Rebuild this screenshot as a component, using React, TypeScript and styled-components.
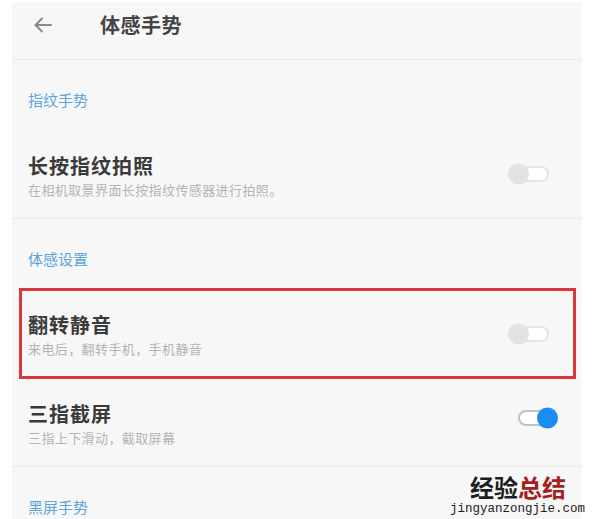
import React from 'react';
import styled, { createGlobalStyle } from 'styled-components';

type Item = {
  title: string;
  desc: string;
  on: boolean;
  marked?: boolean;
  divider?: boolean;
};

type Section = {
  label: string;
  items: Item[];
};

const sections: Section[] = [
  {
    label: '指纹手势',
    items: [
      { title: '长按指纹拍照', desc: '在相机取景界面长按指纹传感器进行拍照。', on: false, divider: true },
    ],
  },
  {
    label: '体感设置',
    items: [
      { title: '翻转静音', desc: '来电后，翻转手机，手机静音', on: false, marked: true },
      { title: '三指截屏', desc: '三指上下滑动，截取屏幕', on: true, divider: true },
    ],
  },
  { label: '黑屏手势', items: [] },
];

const App = () => {
  return (
    <>
      <GlobalStyle />
      <Page>
        <Screen>
          <Header>
            <BackButton>
              <svg width="20" height="20" viewBox="0 0 20 20" fill="none">
                <path d="M18 10H3M9 3.5L2.5 10L9 16.5" stroke="#8a8a8a" strokeWidth="2" strokeLinecap="round" strokeLinejoin="round" />
              </svg>
            </BackButton>
            <HeaderTitle>体感手势</HeaderTitle>
          </Header>

          {sections.map((s) => (
            <div key={s.label}>
              <SectionLabel>{s.label}</SectionLabel>
              {s.items.map((it) => (
                <Row key={it.title} $divider={it.divider} $marked={it.marked}>
                  <RowText>
                    <RowTitle>{it.title}</RowTitle>
                    <RowDesc>{it.desc}</RowDesc>
                  </RowText>
                  <Switch $on={it.on} />
                </Row>
              ))}
            </div>
          ))}
        </Screen>

        <Watermark>
          <WatermarkTitle>
            经验<RedText>总结</RedText>
          </WatermarkTitle>
          <WatermarkUrl>jingyanzongjie.com</WatermarkUrl>
        </Watermark>
      </Page>
    </>
  );
};
export default App;

const GlobalStyle = createGlobalStyle`
  html, body {
    margin: 0;
    padding: 0;
    background: #ffffff;
  }
  body {
    font-family: "Noto Sans CJK SC", "Noto Sans", sans-serif;
  }
`;

const Page = styled.div`
  position: relative;
  width: 601px;
  height: 519px;
  overflow: hidden;
  background: #ffffff;
`;

const Screen = styled.div`
  margin: 2px 0 0 12px;
  width: 570px;
  height: 517px;
  background: #f7f7f7;
  overflow: hidden;
`;

const Header = styled.div`
  height: 58px;
  box-sizing: border-box;
  display: flex;
  align-items: center;
  padding: 0 0 12px 21px;
  border-bottom: 1px solid #ebebeb;
`;

const BackButton = styled.div`
  width: 20px;
  height: 20px;
  display: flex;
  margin-right: 47px;
`;

const HeaderTitle = styled.div`
  font-size: 20px;
  font-weight: 700;
  color: #444444;
  letter-spacing: 0.5px;
`;

const SectionLabel = styled.div`
  height: 70px;
  box-sizing: border-box;
  padding: 30px 16px 0;
  font-size: 15px;
  line-height: 20px;
  color: #5ba5dc;
`;

const Row = styled.div<{ $divider?: boolean; $marked?: boolean }>`
  position: relative;
  height: 89px;
  box-sizing: border-box;
  display: flex;
  align-items: center;
  justify-content: space-between;
  padding: 0 33px 0 16px;
  border-bottom: ${(p) => (p.$divider ? '1px solid #ebebeb' : '0')};

  &::after {
    content: '';
    display: ${(p) => (p.$marked ? 'block' : 'none')};
    position: absolute;
    left: 7px;
    right: 6px;
    top: -1px;
    bottom: -1px;
    border: 3px solid #d9363b;
    pointer-events: none;
  }
`;

const RowText = styled.div`
  display: flex;
  flex-direction: column;
  padding-top: 4px;
`;

const RowTitle = styled.div`
  font-size: 20px;
  line-height: 24px;
  font-weight: 700;
  color: #3a3a3a;
  letter-spacing: 1px;
`;

const RowDesc = styled.div`
  margin-top: 3px;
  font-size: 13px;
  line-height: 18px;
  color: #b4b4b4;
  letter-spacing: 0.4px;
`;

const Switch = styled.div<{ $on: boolean }>`
  position: relative;
  width: 27px;
  height: 12px;
  border-radius: 8px;
  border: 2px solid ${(p) => (p.$on ? '#b9c3cb' : '#e4e4e4')};
  background: #ffffff;
  margin-top: ${(p) => (p.$on ? '-8px' : '0')};

  &::after {
    content: '';
    position: absolute;
    top: 50%;
    width: 21px;
    height: 21px;
    border-radius: 50%;
    transform: translateY(-50%);
    background: ${(p) => (p.$on ? '#1c8cf0' : '#e3e3e3')};
    ${(p) => (p.$on ? 'right: -11px;' : 'left: -12px;')}
  }
`;

const Watermark = styled.div`
  position: absolute;
  left: 450px;
  top: 472px;
  width: 140px;
  display: flex;
  flex-direction: column;
  align-items: flex-start;
`;

const WatermarkTitle = styled.div`
  padding-left: 20px;
  font-size: 24px;
  line-height: 30px;
  font-weight: 700;
  color: #1e1e1e;
`;

const RedText = styled.span`
  color: #a51f1e;
`;

const WatermarkUrl = styled.div`
  font-family: "Liberation Mono", "DejaVu Sans Mono", monospace;
  font-size: 12.5px;
  line-height: 14px;
  color: #222222;
`;
